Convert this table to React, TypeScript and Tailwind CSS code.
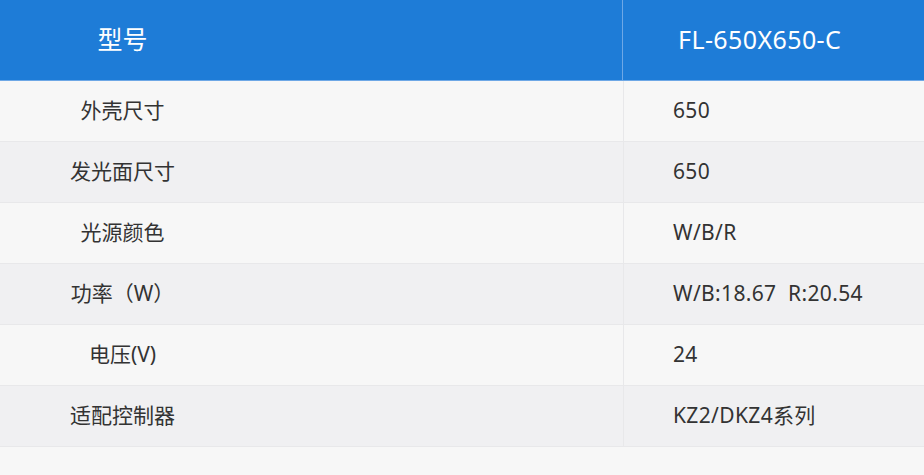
import React from "react";

const rows: [string, string][] = [
  ["外壳尺寸", "650"],
  ["发光面尺寸", "650"],
  ["光源颜色", "W/B/R"],
  ["功率（W）", "W/B:18.67\u00a0\u00a0R:20.54"],
  ["电压(V)", "24"],
  ["适配控制器", "KZ2/DKZ4系列"],
];

export default function App() {
  return (
    <div
      className="w-[924px] h-[475px] bg-[#f7f7f7] text-[#333333] overflow-hidden"
      style={{ fontFamily: '"Noto Sans", "Noto Sans CJK SC", sans-serif' }}
    >
      <div className="flex h-[81px] bg-[#1e7cd7] border-b border-[#6ea8e6] text-white text-[25px]">
        <div className="w-[623px] border-r border-[#6ea8e6] flex items-center">
          <div className="w-[245px] text-center">型号</div>
        </div>
        <div className="flex-1 flex items-center pl-[55px] tracking-[0.4px]">FL-650X650-C</div>
      </div>
      {rows.map(([k, v], i) => (
        <div
          key={k}
          className={
            "flex h-[61px] border-b border-[#e8e8ea] text-[21px] " +
            (i % 2 === 0 ? "bg-[#f7f7f7]" : "bg-[#f0f0f2]")
          }
        >
          <div className="w-[624px] border-r border-[#e8e8ea] flex items-center">
            <div className="w-[245px] text-center">{k}</div>
          </div>
          <div className="flex-1 flex items-center pl-[49px] tracking-[0.35px]">{v}</div>
        </div>
      ))}
    </div>
  );
}
